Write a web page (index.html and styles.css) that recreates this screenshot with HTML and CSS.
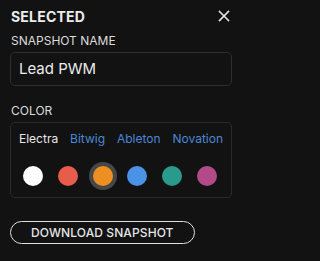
FILE: index.html
```html
<!DOCTYPE html>
<html>
<head>
<meta charset="utf-8">
<link rel="stylesheet" href="styles.css">
</head>
<body>
<div class="panel">
  <div class="header">
    <span class="title">SELECTED</span>
    <svg class="close" width="12" height="12" viewBox="0 0 12 12"><path d="M1.5 1.5 L10.5 10.5 M10.5 1.5 L1.5 10.5" stroke="#e6e6e6" stroke-width="1.6" stroke-linecap="square" fill="none"/></svg>
  </div>
  <div class="label">SNAPSHOT NAME</div>
  <div class="input">Lead PWM</div>
  <div class="label label-color">COLOR</div>
  <div class="color-box">
    <div class="tabs">
      <span class="tab active">Electra</span>
      <span class="tab">Bitwig</span>
      <span class="tab">Ableton</span>
      <span class="tab">Novation</span>
    </div>
    <div class="swatches">
      <span class="cell"><span class="dot white"></span></span>
      <span class="cell"><span class="dot red"></span></span>
      <span class="cell selected"><span class="dot orange"></span></span>
      <span class="cell"><span class="dot blue"></span></span>
      <span class="cell"><span class="dot teal"></span></span>
      <span class="cell"><span class="dot pink"></span></span>
    </div>
  </div>
  <div class="button-row">
    <button class="download">DOWNLOAD SNAPSHOT</button>
  </div>
</div>
</body>
</html>
```
FILE: styles.css
```css
html, body {
  margin: 0;
  padding: 0;
  background: #121212;
}
body {
  width: 244px;
  height: 261px;
  overflow: hidden;
  font-family: Inter, "Noto Sans", sans-serif;
  color: #e8e8e8;
}
.panel {
  padding: 7px 12px 0 10px;
  display: flex;
  flex-direction: column;
}
.header {
  display: flex;
  justify-content: space-between;
  align-items: center;
  height: 20px;
  padding-left: 1px;
}
.title {
  font-size: 14px;
  font-weight: 700;
  line-height: 20px;
  letter-spacing: 0.2px;
  color: #ececec;
}
.close {
  display: block;
  margin-right: 2px;
  margin-top: -2px;
}
.label {
  margin-top: 6px;
  font-size: 12px;
  line-height: 16px;
  padding-left: 1px;
  color: #dcdcdc;
}
.label-color {
  margin-top: 17px;
}
.input {
  margin-top: 3px;
  height: 32px;
  border: 1px solid #2e2e2e;
  border-radius: 5px;
  padding: 0 8px;
  font-size: 15px;
  line-height: 32px;
  color: #ececec;
  background: #121212;
}
.color-box {
  margin-top: 3px;
  border: 1px solid #2a2a2a;
  border-radius: 5px;
  padding: 6px 8px 7px 8px;
  display: flex;
  flex-direction: column;
  gap: 15px;
}
.tabs {
  display: flex;
  justify-content: space-between;
  font-size: 12px;
  line-height: 18px;
  padding-top: 1px;
  margin-bottom: -1px;
}
.tab {
  color: #4a87d6;
}
.tab.active {
  color: #e8e8e8;
}
.swatches {
  display: flex;
  justify-content: space-between;
  padding-right: 2px;
}
.cell {
  width: 28px;
  height: 28px;
  border-radius: 50%;
  display: flex;
  align-items: center;
  justify-content: center;
}
.cell.selected {
  background: #474747;
}
.dot {
  width: 20px;
  height: 20px;
  border-radius: 50%;
  display: block;
}
.white { background: #ffffff; }
.red { background: #e85c4b; }
.orange { background: #ee8f22; }
.blue { background: #4a92e6; }
.teal { background: #2a9a8c; }
.pink { background: #b24a8a; }
.button-row {
  margin-top: 23px;
  display: flex;
}
.download {
  height: 23px;
  padding: 0 20px;
  border: 1px solid #dedede;
  border-radius: 12px;
  background: transparent;
  color: #e6e6e6;
  font-family: Inter, "Noto Sans", sans-serif;
  font-size: 12px;
  font-weight: 500;
  line-height: 20px;
  letter-spacing: 0.1px;
}
```
